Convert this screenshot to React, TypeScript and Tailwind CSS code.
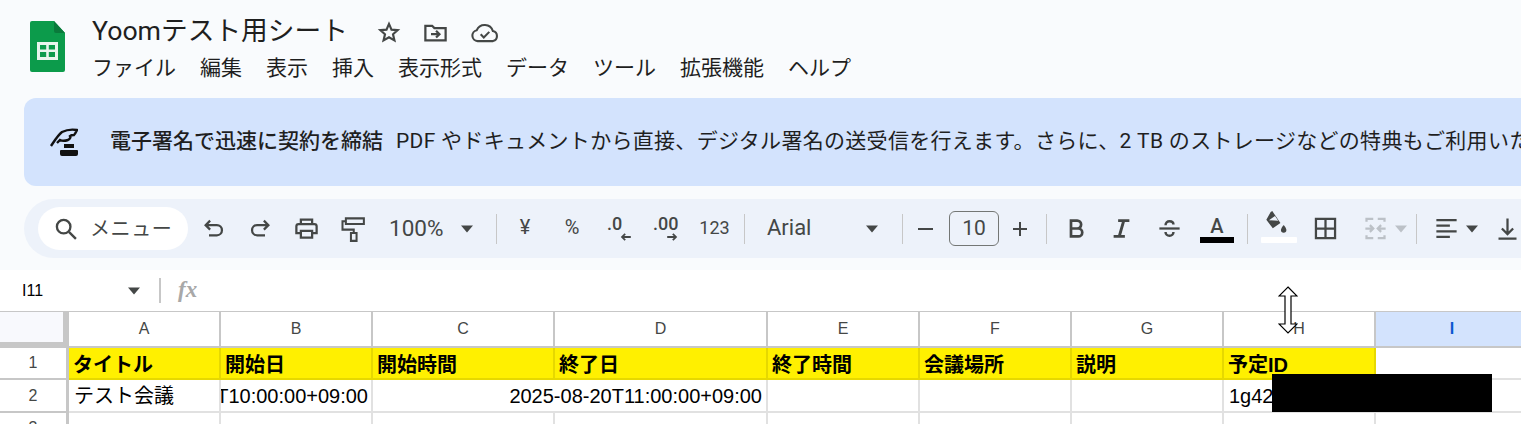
import React from "react";

const ui = "font-['Roboto','Noto_Sans_CJK_JP',sans-serif]";
const sheet = "font-['Liberation_Sans','Noto_Sans_CJK_JP',sans-serif]";

const Caret = ({ color = "#444746" }: { color?: string }) => (
  <svg width="14" height="8" viewBox="0 0 14 8" className="shrink-0">
    <path d="M1 0.5h12L7 7.5z" fill={color} />
  </svg>
);

const Sep = () => <div className="w-px h-[30px] bg-[#c7c7c7] shrink-0" />;

const Icon = ({ children, size = 27, color = "#444746" }: { children: React.ReactNode; size?: number; color?: string }) => (
  <svg width={size} height={size} viewBox="0 0 24 24" fill="none" stroke={color} strokeWidth="2">
    {children}
  </svg>
);

const Logo = () => (
  <svg width="35" height="51" viewBox="0 0 35 51" className="shrink-0">
    <path d="M2 0h22l11 12v37a2 2 0 0 1-2 2H2a2 2 0 0 1-2-2V2a2 2 0 0 1 2-2z" fill="#0c9b4b" />
    <path d="M24 0l11 12H26a2 2 0 0 1-2-2z" fill="#0a7a3b" />
    <path d="M7 21h21v18H7z M10 24v4.5h6.2V24z M18.8 24v4.5H25V24z M10 31v5h6.2v-5z M18.8 31v5H25v-5z" fill="#e8f5ec" fillRule="evenodd" />
  </svg>
);

const Quill = () => (
  <svg width="28" height="30" viewBox="0 0 28 30" className="shrink-0">
    <path d="M1 19C5 13 8 8 12 5c4-2 9-3 15-2-1 2-2 4-3 5-2 0-3 0-4 1 1 1 0 3-2 4-3 1-6 1-8 0l-3 3" fill="none" stroke="#111" strokeWidth="2.4" />
    <path d="M14 17h10v4H14zM11 23h16a1 1 0 0 1 1 1v3a2 2 0 0 1-2 2H12a2 2 0 0 1-2-2v-3a1 1 0 0 1 1-1z" fill="#111" />
  </svg>
);

const Cursor = () => (
  <svg width="20" height="48" viewBox="0 0 20 48" className="absolute left-[1278px] top-[286px]">
    <path d="M10 1l9 9h-6v28h6l-9 9-9-9h6V10H1z" fill="#fff" stroke="#000" strokeWidth="1.2" />
  </svg>
);

const menus = ["ファイル", "編集", "表示", "挿入", "表示形式", "データ", "ツール", "拡張機能", "ヘルプ"];

const Header = () => (
  <div className="flex h-[98px] pl-[30px] pt-[21px]">
    <Logo />
    <div className="ml-[27px] -mt-[7px]">
      <div className="flex items-center h-[34px]">
        <span className="text-[26.700px] leading-[34px] text-[#1f1f1f]">Yoomテスト用シート</span>
        <div className="flex items-center gap-[20px] ml-[28px] mt-[2px]">
          <Icon size={26}>
            <path d="M12 4.500l2.300 5.300 5.700.5-4.300 3.800 1.300 5.600L12 16.800l-5 2.900 1.300-5.600L4 10.300l5.700-.5z" />
          </Icon>
          <Icon size={27}>
            <path d="M3 6h6l2 2h10v11H3z" />
            <path d="M8 13.500h7M12.500 10.500l3 3-3 3" />
          </Icon>
          <svg width="30" height="27" viewBox="0 0 24 22" fill="none" stroke="#444746" strokeWidth="1.7" className="ml-px">
            <path d="M6 18a4.500 4.500 0 0 1-.7-8.900A7 7 0 0 1 18.400 9.800 4.200 4.200 0 0 1 18.500 18z" />
            <path d="M8.500 12.500l2.500 2.500 4.500-4.500" />
          </svg>
        </div>
      </div>
      <div className="flex gap-[24px] mt-[5px] text-[21px] leading-[30px] text-[#1f1f1f]">
        {menus.map((m) => (
          <span key={m}>{m}</span>
        ))}
      </div>
    </div>
  </div>
);

const Banner = () => (
  <div className="flex items-center w-[1600px] h-[88px] ml-[24px] pl-[26px] rounded-[12px] bg-[#d3e3fd] whitespace-nowrap text-[#1f1f1f]">
    <Quill />
    <span className="ml-[32px] text-[21px] font-medium">電子署名で迅速に契約を締結</span>
    <span className="ml-[13px] text-[21px] tracking-[0.300px]">PDF やドキュメントから直接、デジタル署名の送受信を行えます。さらに、2 TB のストレージなどの特典もご利用いただけます</span>
  </div>
);

const Toolbar = () => (
  <div className="flex items-center w-[1600px] h-[59px] mt-[13px] ml-[24px] pl-[14px] rounded-l-[30px] bg-[#edf2fa] text-[#444746]">
    <div className="flex items-center w-[150px] h-[43px] pl-[14px] rounded-full bg-white shrink-0">
      <Icon size={28}>
        <circle cx="10" cy="10" r="5.800" />
        <path d="M14.500 14.500l6 6" />
      </Icon>
      <span className="ml-[10px] text-[20px] tracking-[0.600px] whitespace-nowrap">メニュー</span>
    </div>
    <div className="w-[50px] flex justify-center shrink-0">
      <Icon>
        <path d="M9 5L5 9l4 4M5 9h10a4.500 4.500 0 0 1 0 9H8" />
      </Icon>
    </div>
    <div className="w-[45px] flex justify-center shrink-0">
      <Icon>
        <path d="M15 5l4 4-4 4M19 9H9a4.500 4.500 0 0 0 0 9h7" />
      </Icon>
    </div>
    <div className="w-[46px] flex justify-center shrink-0">
      <Icon>
        <path d="M7 8V4h10v4M7 16H3V10a2 2 0 0 1 2-2h14a2 2 0 0 1 2 2v6h-4M7 14h10v6H7z" />
      </Icon>
    </div>
    <div className="w-[44px] flex justify-center shrink-0">
      <Icon>
        <path d="M7 3h16v5H7zM7 5.500H4V13h10v3M11.500 16h5v7h-5z" strokeWidth="1.800" />
      </Icon>
    </div>
    <div className="flex items-center w-[123px] pl-[16px] text-[22.500px] shrink-0">
      <span>100%</span>
      <span className="ml-[17px]"><Caret /></span>
    </div>
    <Sep />
    <div className="w-[56px] -mt-[3px] text-center text-[20px] shrink-0">¥</div>
    <div className="w-[38px] -mt-[3px] text-center text-[20px] shrink-0">%</div>
    <div className="relative w-[54px] h-[40px] shrink-0 text-[18px] font-medium">
      <span className="absolute left-[16px] top-[1px]">.0</span>
      <svg width="12" height="8" viewBox="0 0 14 10" className="absolute left-[29px] top-[24px]" fill="none" stroke="#444746" strokeWidth="2.200">
        <path d="M13 5H2M6 1L2 5l4 4" />
      </svg>
    </div>
    <div className="relative w-[40px] h-[40px] shrink-0 text-[18px] font-medium">
      <span className="absolute left-[8px] top-[1px]">.00</span>
      <svg width="12" height="8" viewBox="0 0 14 10" className="absolute left-[21px] top-[24px]" fill="none" stroke="#444746" strokeWidth="2.200">
        <path d="M1 5h11M8 1l4 4-4 4" />
      </svg>
    </div>
    <div className="w-[59px] -mt-[3px] text-center text-[18px] shrink-0">123</div>
    <Sep />
    <div className="flex items-center w-[157px] pl-[22px] text-[22px] shrink-0">
      <span className="-mt-[3px]">Arial</span>
      <span className="ml-[54px]"><Caret /></span>
    </div>
    <Sep />
    <div className="w-[44px] flex justify-center shrink-0">
      <div className="w-[15px] h-[2px] bg-[#444746]" />
    </div>
    <div className="flex items-center justify-center w-[50px] h-[35px] ml-[2px] rounded-[6px] border border-[#747775] text-[21px] shrink-0">10</div>
    <div className="w-[42px] flex justify-center shrink-0">
      <Icon size={24}>
        <path d="M5 12h14M12 5v14" />
      </Icon>
    </div>
    <div className="ml-[5px]"><Sep /></div>
    <div className="w-[56px] flex justify-center shrink-0">
      <Icon>
        <path d="M8 5h5.500a3.500 3.500 0 0 1 0 7H8zM8 12h6.500a3.500 3.500 0 0 1 0 7H8z" strokeWidth="2.400" />
      </Icon>
    </div>
    <div className="w-[36px] flex justify-center shrink-0">
      <Icon>
        <path d="M9 5h10M5 19h10M14 5l-4 14" strokeWidth="2.600" />
      </Icon>
    </div>
    <div className="w-[60px] flex justify-center shrink-0">
      <Icon>
        <path d="M3 12h18" />
        <path d="M8.500 9c0-2 1.500-3.500 3.500-3.500s3.500 1 3.500 3M8.500 15c0 2 1.500 3.500 3.500 3.500s3.500-1.500 3.500-3.500" strokeWidth="2.200" />
      </Icon>
    </div>
    <div className="relative w-[36px] h-[40px] flex justify-center shrink-0">
      <span className="absolute top-[5px] text-[20px] leading-[24px] font-medium">A</span>
      <div className="absolute left-[1px] bottom-[6px] w-[34px] h-[6px] bg-black" />
    </div>
    <div className="ml-[12px]"><Sep /></div>
    <div className="relative w-[56px] h-[40px] shrink-0">
      <svg width="26" height="26" viewBox="0 0 24 24" className="absolute left-[14px] top-[2px]">
        <path d="M8 1l1.500-1 2 3 5.500 8-7 5-6-8z" fill="#444746" />
        <path d="M7 7l6-1 3 5-6.500 4z" fill="#444746" />
        <path d="M6.500 8.500l5.500-4 3 4.500z" fill="#edf2fa" />
        <path d="M20 13s2.500 3 2.500 4.500a2.500 2.500 0 0 1-5 0C17.500 16 20 13 20 13z" fill="#444746" />
      </svg>
      <div className="absolute left-[13px] bottom-[6px] w-[36px] h-[6px] rounded-[1px] bg-white" />
    </div>
    <div className="w-[46px] flex justify-center shrink-0 -ml-[2px]">
      <Icon>
        <path d="M3.500 3.500h17v17h-17zM12 3.500v17M3.500 12h17" />
      </Icon>
    </div>
    <div className="w-[56px] flex justify-center shrink-0 ml-[-1px]">
      <Icon color="#bcc1c7">
        <path d="M4 6V3.500h6M14 3.500h6V6M4 18v2.500h6M14 20.500h6V18M3 12h7M7 9l3 3-3 3M21 12h-7M17 9l-3 3 3 3" />
      </Icon>
    </div>
    <div className="w-[16px] flex justify-center shrink-0 -ml-[10px]"><Caret color="#bcc1c7" /></div>
    <div className="ml-[7px]"><Sep /></div>
    <div className="w-[40px] flex justify-center shrink-0 ml-[9px]">
      <Icon>
        <path d="M3 4.500h18M3 9.500h12M3 14.500h18M3 19.500h12" />
      </Icon>
    </div>
    <div className="w-[14px] flex justify-center shrink-0 ml-[-1px]"><Caret /></div>
    <div className="w-[54px] flex justify-center shrink-0 ml-[1px]">
      <Icon>
        <path d="M12 3v14M7 12l5 5 5-5M4 21h16" />
      </Icon>
    </div>
  </div>
);

const FormulaBar = () => (
  <div className="flex items-center h-[41px] mt-[12px] pl-[22px] bg-white">
    <span className={`${sheet} w-[105px] text-[16px] text-black`}>I11</span>
    <Caret />
    <div className="ml-[18px] w-[2px] h-[25px] bg-[#c7c7c7]" />
    <span className="ml-[17px] font-['Liberation_Serif',serif] italic font-bold text-[23px] text-[#a8a8a8]">fx</span>
  </div>
);

const gridCols = "grid grid-cols-[69px_152px_152px_182px_213px_152px_152px_152px_152px_152px]";
const headers = ["A", "B", "C", "D", "E", "F", "G", "H"];
const titles = ["タイトル", "開始日", "開始時間", "終了日", "終了時間", "会議場所", "説明", "予定ID"];

const Grid = () => (
  <div className={`${sheet} border-t border-[#c7c7c7] bg-white`}>
    <div className={`${gridCols} h-[36px]`}>
      <div className="bg-[#f8f9fd] border-r-[6px] border-b-[6px] border-[#c7c7c7]" />
      {headers.map((h) => (
        <div key={h} className="flex items-center justify-center border-r-2 border-b-2 border-[#c7c7c7] text-[16px] text-[#444746]">
          {h}
        </div>
      ))}
      <div className="flex items-center justify-center bg-[#d3e3fd] border-b-2 border-[#c7c7c7] text-[16px] font-bold text-[#0b57d0]">I</div>
    </div>
    <div className={`${gridCols} h-[32px]`}>
      <div className="flex items-center justify-center border-r-[3px] border-b-2 border-[#c7c7c7] text-[16px] text-[#444746]">1</div>
      {titles.map((t) => (
        <div key={t} className="flex items-center pl-[4px] pt-[3px] bg-[#fff000] border-r-2 border-b-2 border-[#e6d800] text-[20px] font-bold text-black whitespace-nowrap overflow-hidden">
          {t}
        </div>
      ))}
      <div className="border-b-2 border-[#e1e1e1]" />
    </div>
    <div className={`${gridCols} h-[32px] text-[20px] text-black`}>
      <div className="flex items-center justify-center border-r-[3px] border-b-2 border-[#c7c7c7] text-[16px] text-[#444746]">2</div>
      <div className="flex items-center pl-[5px] pt-[1px] border-r-2 border-b-2 border-[#e1e1e1]">テスト会議</div>
      <div className="flex items-center justify-end pr-[3px] pt-[1px] border-r-2 border-b-2 border-[#e1e1e1] overflow-hidden whitespace-nowrap">2025-08-20T10:00:00+09:00</div>
      <div className="border-b-2 border-[#e1e1e1]" />
      <div className="flex items-center justify-end pr-[4px] pt-[1px] border-r-2 border-b-2 border-[#e1e1e1] whitespace-nowrap">2025-08-20T11:00:00+09:00</div>
      <div className="border-r-2 border-b-2 border-[#e1e1e1]" />
      <div className="border-r-2 border-b-2 border-[#e1e1e1]" />
      <div className="border-r-2 border-b-2 border-[#e1e1e1]" />
      <div className="flex items-center pl-[5px] pt-[1px] border-r-2 border-b-2 border-[#e1e1e1] whitespace-nowrap overflow-hidden">1g42</div>
      <div className="border-b-2 border-[#e1e1e1]" />
    </div>
    <div className={`${gridCols} h-[32px]`}>
      <div className="flex items-center justify-center border-r-[3px] border-[#c7c7c7] text-[16px] text-[#444746]">3</div>
      {headers.map((h) => (
        <div key={h} className="border-r-2 border-[#e1e1e1]" />
      ))}
      <div />
    </div>
  </div>
);

export default function App() {
  return (
    <div className={`${ui} relative w-[1521px] h-[424px] overflow-hidden bg-[#f9fbfd]`}>
      <Header />
      <Banner />
      <Toolbar />
      <FormulaBar />
      <Grid />
      <div className="absolute left-[1272px] top-[374px] w-[220px] h-[38px] bg-black" />
      <Cursor />
    </div>
  );
}
